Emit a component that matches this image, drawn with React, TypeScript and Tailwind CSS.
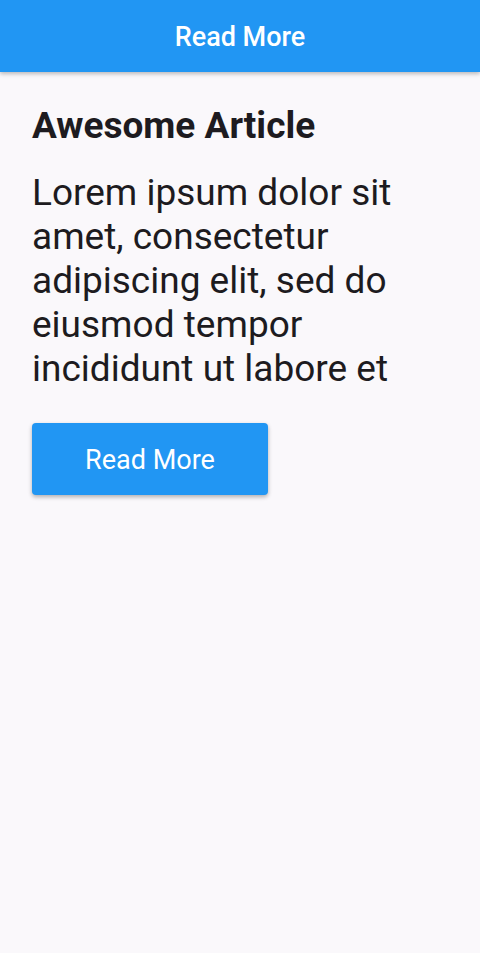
export default function App() {
  return (
    <div className="min-h-[953px] bg-[#faf8fb] font-['Roboto',sans-serif]">
      <header className="flex h-[72px] items-center justify-center bg-[#2196f3] shadow-[0_2px_4px_rgba(0,0,0,0.25)]">
        <h1 className="pt-[3px] text-[27px] font-medium text-white">Read More</h1>
      </header>
      <main className="px-8 pt-8">
        <h2 className="text-[37px] leading-[44px] font-bold text-[#1d1b20]">Awesome Article</h2>
        <p className="mt-[23px] text-[37px] leading-[44px] text-[#1d1b20]">
          Lorem ipsum dolor sit amet, consectetur adipiscing elit, sed do eiusmod tempor incididunt ut labore et
        </p>
        <button className="mt-8 flex h-[72px] w-[236px] items-center justify-center rounded bg-[#2196f3] pt-0.5 text-[27px] text-white shadow-[0_2px_4px_rgba(0,0,0,0.3)]">
          Read More
        </button>
      </main>
    </div>
  );
}
